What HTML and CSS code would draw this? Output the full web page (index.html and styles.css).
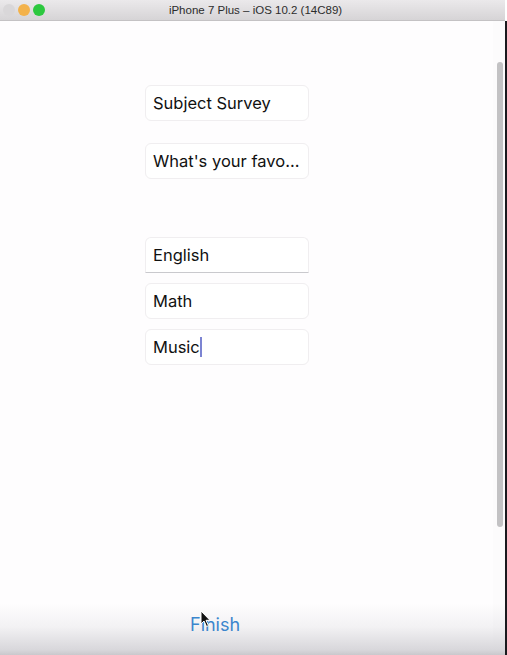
FILE: index.html
```html
<!DOCTYPE html>
<html>
<head>
<meta charset="utf-8">
<link rel="stylesheet" href="styles.css">
</head>
<body>
<div class="window">
  <div class="titlebar">
    <div class="lights">
      <span class="light close"></span>
      <span class="light min"></span>
      <span class="light max"></span>
    </div>
    <div class="title">iPhone 7 Plus – iOS 10.2 (14C89)</div>
  </div>
  <div class="main">
    <div class="screen">
      <div class="fields">
        <div class="field">Subject Survey</div>
        <div class="field q">What's your favo...</div>
        <div class="field opt first">English</div>
        <div class="field opt">Math</div>
        <div class="field opt">Music<span class="caret"></span></div>
      </div>
      <div class="footer">
        <span class="finish">Finish</span>
        <svg class="pointer" width="12" height="18" viewBox="0 0 12 18"><path d="M1 1 L1 14 L4 11 L6.5 16.5 L8.5 15.6 L6 10.3 L10 10.3 Z" fill="#111" stroke="#fff" stroke-width="1"/></svg>
      </div>
    </div>
    <div class="side">
      <div class="divider"></div>
      <div class="track"><div class="thumb"></div></div>
    </div>
    <div class="edge"></div>
  </div>
</div>
</body>
</html>
```
FILE: styles.css
```css
html, body {
  margin: 0;
  padding: 0;
}
body {
  font-family: "Liberation Sans", Arial, sans-serif;
  background: #fff;
}
.window {
  width: 507px;
  height: 655px;
  display: flex;
  flex-direction: column;
  overflow: hidden;
}
.titlebar {
  height: 21px;
  flex: none;
  position: relative;
  display: flex;
  align-items: center;
  justify-content: center;
  background: linear-gradient(#ebe9eb, #d6d4d6);
  border-bottom: 1px solid #c4c2c4;
  box-sizing: border-box;
  margin-right: 2px;
}
.lights {
  position: absolute;
  left: 3px;
  top: 4px;
  display: flex;
  gap: 3px;
}
.light {
  width: 12px;
  height: 12px;
  border-radius: 50%;
  display: block;
}
.close { background: #d9d7d9; }
.min { background: #f3b24b; }
.max { background: #2cc83f; }
.title {
  font-size: 11.5px;
  color: #2c2c2c;
  padding-left: 6px;
}
.main {
  flex: 1;
  display: flex;
  min-height: 0;
}
.screen {
  flex: 1;
  display: flex;
  flex-direction: column;
  background: #fefdfe;
}
.fields {
  flex: 1;
  padding-top: 64px;
  padding-left: 145px;
  display: flex;
  flex-direction: column;
  gap: 22px;
}
.field {
  width: 164px;
  height: 36px;
  box-sizing: border-box;
  border: 1px solid #f0eef0;
  border-radius: 6px;
  padding-left: 7px;
  display: flex;
  align-items: center;
  font-family: "Inter", "Liberation Sans", sans-serif;
  font-size: 16.5px;
  color: #111;
  background: #fff;
}
.field.q {
  margin-bottom: 36px;
}
.field.opt {
  margin-top: -12px;
}
.field.first {
  margin-top: 0;
  border-bottom: 1px solid #c9c9cd;
  border-radius: 6px 6px 0 0;
}
.caret {
  width: 2px;
  height: 20px;
  background: #7c84d2;
  display: inline-block;
  margin-left: 0;
}
.footer {
  height: 52px;
  flex: none;
  position: relative;
  padding-left: 190px;
  display: flex;
  align-items: flex-start;
  padding-top: 11px;
  box-sizing: border-box;
  background: linear-gradient(#fefdfe 0%, #f3f2f4 45%, #d8d7db 90%, #c9c8cc 100%);
}
.finish {
  font-family: "Inter", "Liberation Sans", sans-serif;
  font-size: 18px;
  color: #3b86cd;
}
.pointer {
  position: absolute;
  left: 200px;
  top: 7px;
}
.side {
  width: 12px;
  flex: none;
  display: flex;
  background: linear-gradient(#fcfbfc 0%, #f1f0f2 45%, #d8d7db 90%, #c9c8cc 100%) bottom / 100% 52px no-repeat, #fcfbfc;
}
.divider {
  width: 1px;
  background: #e2e0e2;
}
.track {
  flex: 1;
  padding: 41px 3px 0 4px;
}
.thumb {
  width: 6px;
  height: 465px;
  border-radius: 3px;
  background: #c3c2c4;
}
.edge {
  width: 2px;
  flex: none;
  background: #1a1a1e;
}
```
